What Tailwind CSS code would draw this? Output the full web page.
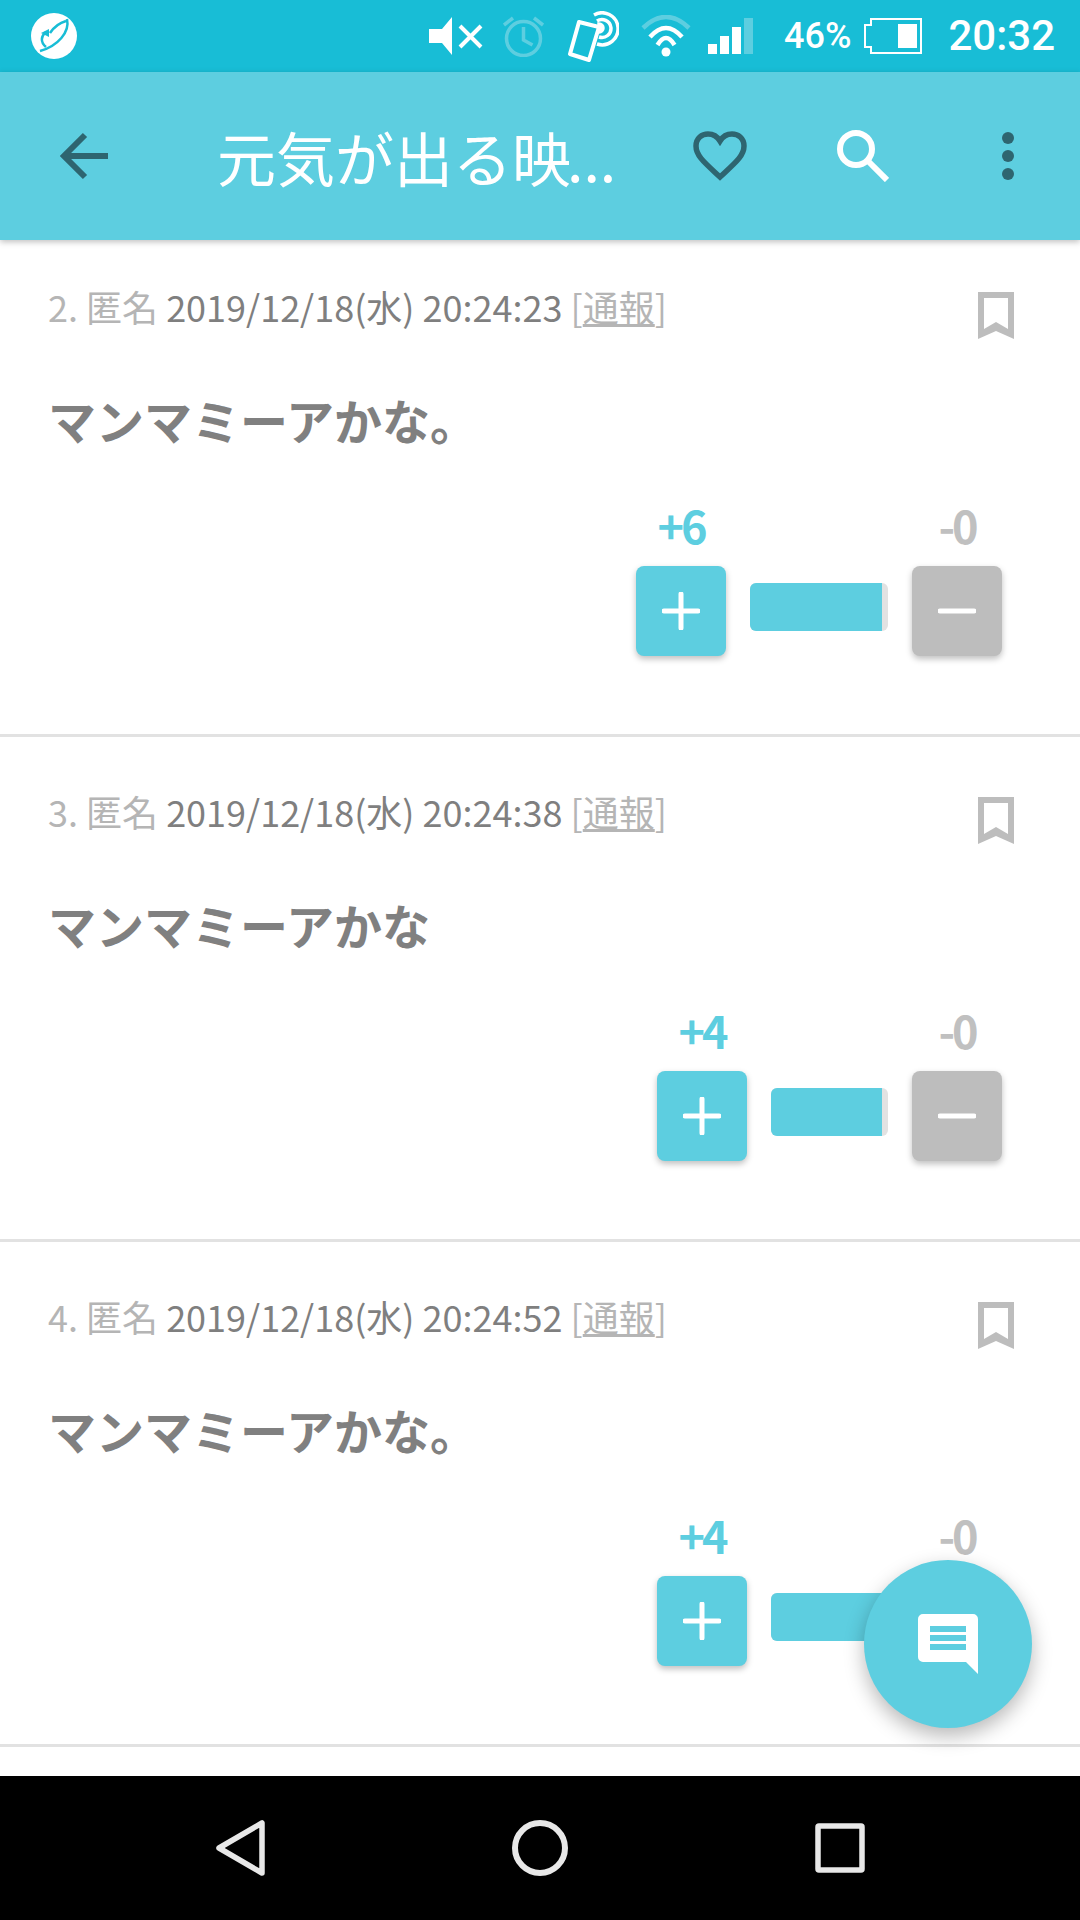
<!DOCTYPE html>
<html lang="ja">
<head>
  <meta charset="UTF-8">
  <meta name="viewport" content="width=device-width, initial-scale=1.0">
  <title>元気が出る映画</title>
  <script src="https://cdn.jsdelivr.net/npm/@tailwindcss/browser@4"></script>
</head>
<body class="bg-white font-['Noto_Sans_CJK_JP','Noto_Sans',sans-serif]">
  <div class="relative flex h-[1920px] w-[1080px] flex-col overflow-hidden">

    <!-- Status bar -->
    <div class="flex h-[72px] shrink-0 items-center bg-[#18bdd6] pl-[31px] pr-[25px] text-white">
      <svg class="h-[46px] w-[46px] blur-[0.6px]" viewBox="0 0 46 46" fill="none">
        <circle cx="23" cy="23" r="23" fill="#fff"/>
        <path d="M36 6c3 13-9 27-27 32" stroke="#18bdd6" stroke-width="2.5"/>
        <path d="M15 34c-6-5-5-11 0-15M19 20c4-6 9-10 16-12" stroke="#18bdd6" stroke-width="2.5"/>
        <path d="M10 20l8-4v8z" fill="#18bdd6"/>
      </svg>
      <div class="ml-auto flex items-center">
        <!-- muted -->
        <svg class="h-[38px] w-[54px]" viewBox="0 0 54 38">
          <path d="M0 12h13L23 0v38L13 26H0z" fill="#fff"/>
          <path d="M31 9l21 21M52 9L31 30" stroke="#fff" stroke-width="4"/>
        </svg>
        <!-- alarm -->
        <svg class="ml-[20px] h-[42px] w-[41px]" viewBox="0 0 41 42" fill="none" stroke="#5dcee0" stroke-width="3.5">
          <circle cx="20.5" cy="23.5" r="17"/>
          <path d="M20.5 12v13l9 5M1 10l9-7M40 10l-9-7"/>
        </svg>
        <!-- nfc phone -->
        <svg class="ml-[24px] h-[51px] w-[51px]" viewBox="0 0 51 51" fill="none" stroke="#fff" stroke-width="3.5">
          <path d="M11 11l20 5-10 33-19-6z" stroke-linejoin="round" stroke-width="4"/>
          <path d="M26 4a16 16 0 1 1 3 29M29 10a9 9 0 1 1 2 16"/>
          <path d="M31 13a4 4 0 0 1 0 8z" fill="#fff"/>
        </svg>
        <!-- wifi -->
        <svg class="ml-[22px] h-[42px] w-[50px]" viewBox="0 0 50 42" fill="none" stroke-width="4.5">
          <path d="M2 13Q25-9 48 13" stroke="#5dcee0"/>
          <path d="M9 22Q25 4 41 22M16.5 30Q25 16 33.5 30" stroke="#fff"/>
          <circle cx="25" cy="37" r="4.5" fill="#fff"/>
        </svg>
        <!-- signal -->
        <div class="ml-[17px] flex h-[36px] items-end gap-[3px]">
          <div class="h-[10px] w-[9px] bg-white"></div>
          <div class="h-[18px] w-[9px] bg-white"></div>
          <div class="h-[27px] w-[9px] bg-white"></div>
          <div class="h-[36px] w-[9px] bg-[#5dcee0]"></div>
        </div>
        <span class="ml-[31px] font-['Roboto'] text-[36px] font-medium leading-none">46%</span>
        <!-- battery -->
        <svg class="ml-[13px] h-[36px] w-[58px]" viewBox="0 0 58 36" fill="none" stroke="#fff" stroke-width="2">
          <path d="M7 1h50v34H7V29H1V7h6z"/>
          <rect x="34" y="6" width="19" height="24" fill="#fff" stroke="none"/>
        </svg>
        <span class="ml-[26px] font-['Roboto'] text-[42px] font-medium leading-none">20:32</span>
      </div>
    </div>

    <!-- App bar -->
    <div class="relative z-10 flex h-[168px] shrink-0 items-center bg-[#5dcee0] shadow-[0_2px_6px_rgba(0,0,0,0.25)]">
      <svg class="ml-[60px] h-[48px] w-[48px]" viewBox="0 0 48 48" fill="none" stroke="#2e6570" stroke-width="6">
        <path d="M48 24H4M25 3L4 24l21 21"/>
      </svg>
      <span class="ml-[109px] w-[476px] whitespace-nowrap text-[59px] leading-none text-white">元気が出る映<span class="ml-[-4px]">...</span></span>
      <svg class="h-[50px] w-[54px]" viewBox="0 0 54 50" fill="none" stroke="#2e6570" stroke-width="5.5">
        <path d="M27 46C12 32 3 25 3 15 3 7 9 3 15 3c5 0 9 2 12 7 3-5 7-7 12-7 6 0 12 4 12 12 0 10-9 17-24 31z"/>
      </svg>
      <svg class="ml-[90px] h-[52px] w-[52px]" viewBox="0 0 52 52" fill="none" stroke="#fff" stroke-width="6">
        <circle cx="19" cy="19" r="16"/>
        <path d="M31 31l19 19"/>
      </svg>
      <div class="ml-[113px] flex flex-col gap-[6px]">
        <div class="h-[12px] w-[12px] rounded-full bg-[#2e6570]"></div>
        <div class="h-[12px] w-[12px] rounded-full bg-[#2e6570]"></div>
        <div class="h-[12px] w-[12px] rounded-full bg-[#2e6570]"></div>
      </div>
    </div>

    <!-- Comment list -->
    <div class="flex-1 overflow-hidden">

      <div class="flex h-[497px] flex-col border-b-[3px] border-[#e2e2e2] pl-[48px] pr-[78px] pt-[44px]">
        <div class="flex items-start justify-between">
          <p class="text-[36px] leading-[45px] text-[#b5b5b5]">2. 匿名 <span class="text-[#7f7f7f]">2019/12/18(水) 20:24:23</span> [<span class="underline">通報</span>]</p>
          <svg class="mr-[-12px] mt-[8px] h-[47px] w-[36px]" viewBox="0 0 36 47"><path fill-rule="evenodd" d="M0 0h36v47L18 39 0 47zM6 6v31l12-7 12 7V6z" fill="#bdbdbd"/></svg>
        </div>
        <p class="mt-[48px] text-[48px] font-bold leading-[64px] text-[#808080]">マンマミーアかな。</p>
        <div class="mt-[49px] flex justify-end">
          <div class="flex w-[90px] flex-col items-center">
            <span class="text-[45px] font-bold leading-[50px] tracking-[-3px] text-[#5dcee0]">+6</span>
            <button class="mt-[16px] flex h-[90px] w-[90px] items-center justify-center rounded-[8px] bg-[#5dcee0] shadow-[0_3px_6px_rgba(0,0,0,0.25)]">
              <svg class="h-[38px] w-[38px]" viewBox="0 0 38 38" stroke="#fff" stroke-width="5" stroke-linecap="round"><path d="M19 2v34M2 19h34"/></svg>
            </button>
          </div>
          <div class="mx-[24px] mt-[83px] h-[48px] w-[138px] overflow-hidden rounded-[6px] bg-[#e2e2e2]">
            <div class="h-full w-[132px] bg-[#5dcee0]"></div>
          </div>
          <div class="flex w-[90px] flex-col items-center">
            <span class="text-[45px] font-bold leading-[50px] tracking-[-3px] text-[#c0c0c0]">-0</span>
            <button class="mt-[16px] flex h-[90px] w-[90px] items-center justify-center rounded-[8px] bg-[#bdbdbd] shadow-[0_3px_6px_rgba(0,0,0,0.25)]">
              <svg class="h-[38px] w-[38px]" viewBox="0 0 38 38" stroke="#fff" stroke-width="5" stroke-linecap="round"><path d="M2 19h34"/></svg>
            </button>
          </div>
        </div>
      </div>

      <div class="flex h-[505px] flex-col border-b-[3px] border-[#e2e2e2] pl-[48px] pr-[78px] pt-[52px]">
        <div class="flex items-start justify-between">
          <p class="text-[36px] leading-[45px] text-[#b5b5b5]">3. 匿名 <span class="text-[#7f7f7f]">2019/12/18(水) 20:24:38</span> [<span class="underline">通報</span>]</p>
          <svg class="mr-[-12px] mt-[8px] h-[47px] w-[36px]" viewBox="0 0 36 47"><path fill-rule="evenodd" d="M0 0h36v47L18 39 0 47zM6 6v31l12-7 12 7V6z" fill="#bdbdbd"/></svg>
        </div>
        <p class="mt-[48px] text-[48px] font-bold leading-[64px] text-[#808080]">マンマミーアかな</p>
        <div class="mt-[49px] flex justify-end">
          <div class="flex w-[90px] flex-col items-center">
            <span class="text-[45px] font-bold leading-[50px] tracking-[-3px] text-[#5dcee0]">+4</span>
            <button class="mt-[16px] flex h-[90px] w-[90px] items-center justify-center rounded-[8px] bg-[#5dcee0] shadow-[0_3px_6px_rgba(0,0,0,0.25)]">
              <svg class="h-[38px] w-[38px]" viewBox="0 0 38 38" stroke="#fff" stroke-width="5" stroke-linecap="round"><path d="M19 2v34M2 19h34"/></svg>
            </button>
          </div>
          <div class="mx-[24px] mt-[83px] h-[48px] w-[117px] overflow-hidden rounded-[6px] bg-[#e2e2e2]">
            <div class="h-full w-[111px] bg-[#5dcee0]"></div>
          </div>
          <div class="flex w-[90px] flex-col items-center">
            <span class="text-[45px] font-bold leading-[50px] tracking-[-3px] text-[#c0c0c0]">-0</span>
            <button class="mt-[16px] flex h-[90px] w-[90px] items-center justify-center rounded-[8px] bg-[#bdbdbd] shadow-[0_3px_6px_rgba(0,0,0,0.25)]">
              <svg class="h-[38px] w-[38px]" viewBox="0 0 38 38" stroke="#fff" stroke-width="5" stroke-linecap="round"><path d="M2 19h34"/></svg>
            </button>
          </div>
        </div>
      </div>

      <div class="flex h-[505px] flex-col border-b-[3px] border-[#e2e2e2] pl-[48px] pr-[78px] pt-[52px]">
        <div class="flex items-start justify-between">
          <p class="text-[36px] leading-[45px] text-[#b5b5b5]">4. 匿名 <span class="text-[#7f7f7f]">2019/12/18(水) 20:24:52</span> [<span class="underline">通報</span>]</p>
          <svg class="mr-[-12px] mt-[8px] h-[47px] w-[36px]" viewBox="0 0 36 47"><path fill-rule="evenodd" d="M0 0h36v47L18 39 0 47zM6 6v31l12-7 12 7V6z" fill="#bdbdbd"/></svg>
        </div>
        <p class="mt-[48px] text-[48px] font-bold leading-[64px] text-[#808080]">マンマミーアかな。</p>
        <div class="mt-[49px] flex justify-end">
          <div class="flex w-[90px] flex-col items-center">
            <span class="text-[45px] font-bold leading-[50px] tracking-[-3px] text-[#5dcee0]">+4</span>
            <button class="mt-[16px] flex h-[90px] w-[90px] items-center justify-center rounded-[8px] bg-[#5dcee0] shadow-[0_3px_6px_rgba(0,0,0,0.25)]">
              <svg class="h-[38px] w-[38px]" viewBox="0 0 38 38" stroke="#fff" stroke-width="5" stroke-linecap="round"><path d="M19 2v34M2 19h34"/></svg>
            </button>
          </div>
          <div class="mx-[24px] mt-[83px] h-[48px] w-[117px] overflow-hidden rounded-[6px] bg-[#e2e2e2]">
            <div class="h-full w-[111px] bg-[#5dcee0]"></div>
          </div>
          <div class="flex w-[90px] flex-col items-center">
            <span class="text-[45px] font-bold leading-[50px] tracking-[-3px] text-[#c0c0c0]">-0</span>
            <button class="mt-[16px] flex h-[90px] w-[90px] items-center justify-center rounded-[8px] bg-[#bdbdbd] shadow-[0_3px_6px_rgba(0,0,0,0.25)]">
              <svg class="h-[38px] w-[38px]" viewBox="0 0 38 38" stroke="#fff" stroke-width="5" stroke-linecap="round"><path d="M2 19h34"/></svg>
            </button>
          </div>
        </div>
      </div>
    </div>

    <!-- Floating comment button -->
    <button class="absolute left-[864px] top-[1560px] z-20 flex h-[168px] w-[168px] items-center justify-center rounded-full bg-[#5dcee0] shadow-[0_8px_20px_rgba(0,0,0,0.28)]">
      <svg class="h-[60px] w-[60px]" viewBox="0 0 60 60">
        <path d="M5 0h50a5 5 0 0 1 5 5v55L48 48H5a5 5 0 0 1-5-5V5a5 5 0 0 1 5-5z" fill="#fff"/>
        <path d="M12 12h36v6H12zM12 21h36v6H12zM12 30h36v6H12z" fill="#5dcee0"/>
      </svg>
    </button>

    <!-- Android nav bar -->
    <div class="z-30 flex h-[144px] shrink-0 items-center bg-black pl-[216px]">
      <svg class="h-[56px] w-[50px]" viewBox="0 0 50 56" fill="none" stroke="#e8e8e8" stroke-width="5.5" stroke-linejoin="round">
        <path d="M46 3v50L3 28z"/>
      </svg>
      <svg class="ml-[246px] h-[56px] w-[56px]" viewBox="0 0 56 56" fill="none" stroke="#e8e8e8" stroke-width="6">
        <circle cx="28" cy="28" r="25"/>
      </svg>
      <svg class="ml-[247px] h-[50px] w-[50px]" viewBox="0 0 50 50" fill="none" stroke="#e8e8e8" stroke-width="5.5" stroke-linejoin="round">
        <rect x="3" y="3" width="44" height="44" rx="1"/>
      </svg>
    </div>
  </div>
</body>
</html>
